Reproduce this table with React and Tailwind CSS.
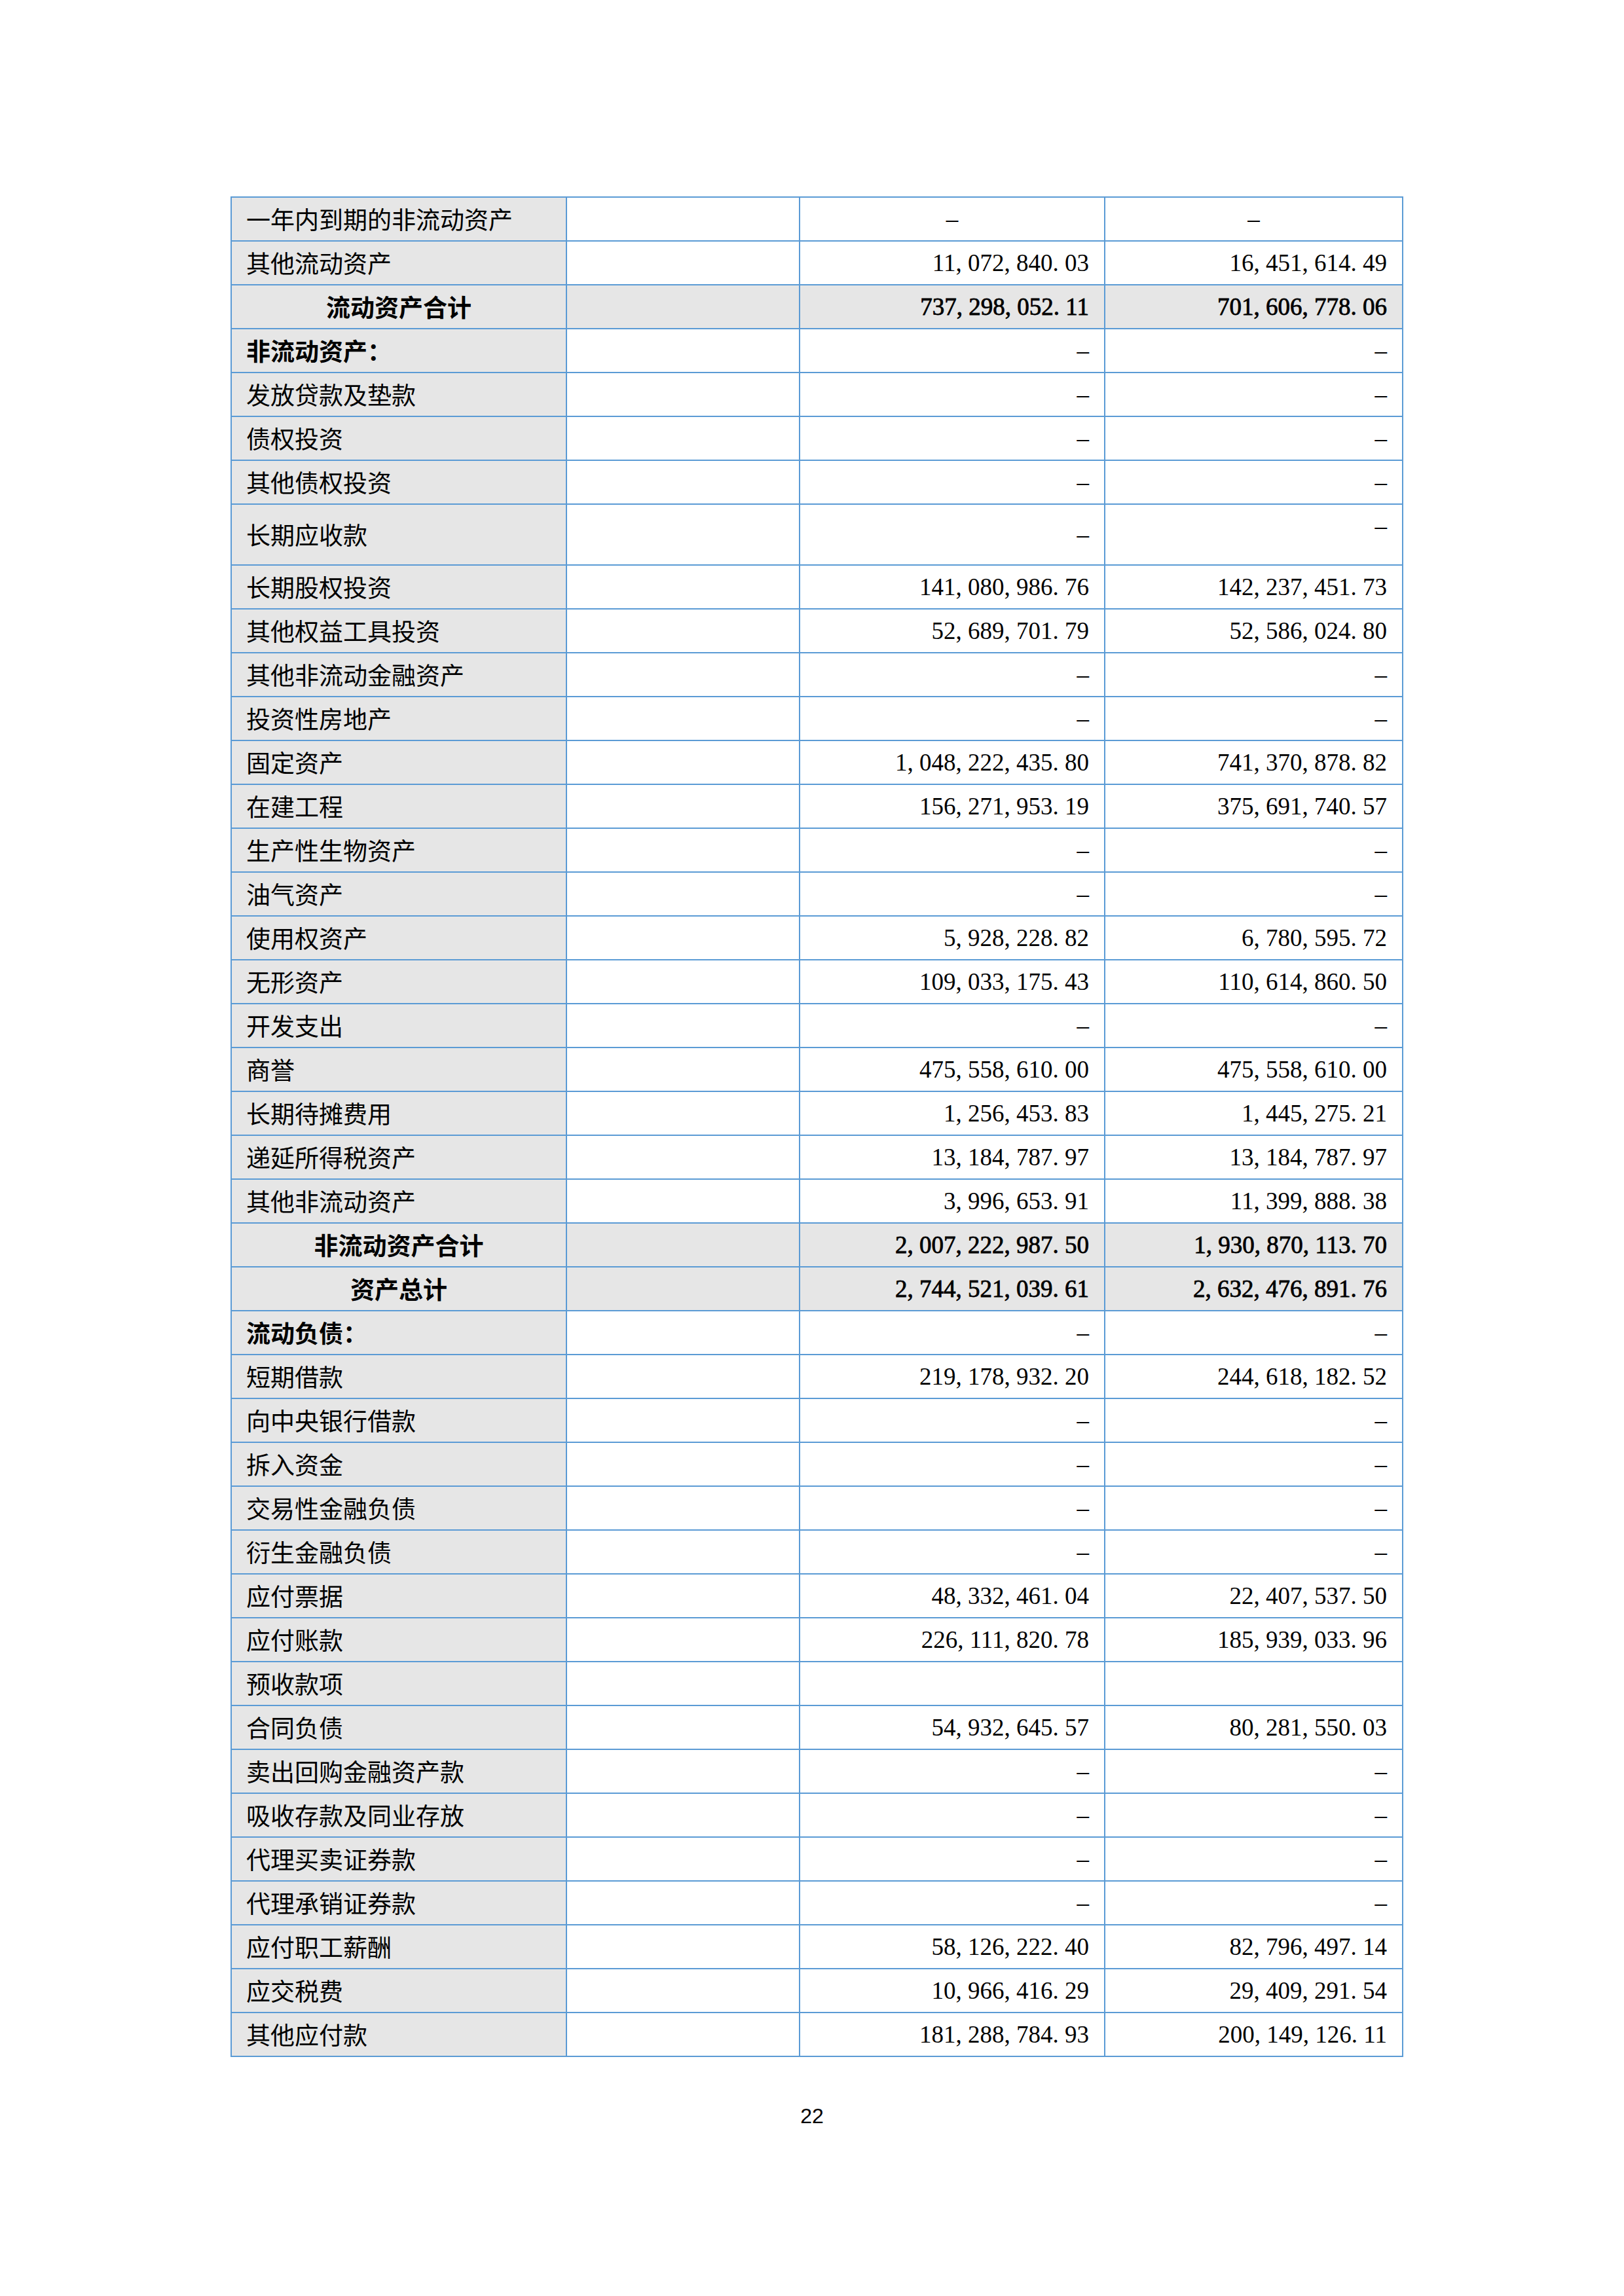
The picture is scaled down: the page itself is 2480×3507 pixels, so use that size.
import React from "react";

const D = "–";

// [label, col3, col4, kind]
// kind: "total" = centered bold label, gray row; "head" = bold label
const ROWS = [
  ["一年内到期的非流动资产", D, D, "center"],
  ["其他流动资产", "11, 072, 840. 03", "16, 451, 614. 49"],
  ["流动资产合计", "737, 298, 052. 11", "701, 606, 778. 06", "total"],
  ["非流动资产：", D, D, "head"],
  ["发放贷款及垫款", D, D],
  ["债权投资", D, D],
  ["其他债权投资", D, D],
  ["长期应收款", D, D, "tall"],
  ["长期股权投资", "141, 080, 986. 76", "142, 237, 451. 73"],
  ["其他权益工具投资", "52, 689, 701. 79", "52, 586, 024. 80"],
  ["其他非流动金融资产", D, D],
  ["投资性房地产", D, D],
  ["固定资产", "1, 048, 222, 435. 80", "741, 370, 878. 82"],
  ["在建工程", "156, 271, 953. 19", "375, 691, 740. 57"],
  ["生产性生物资产", D, D],
  ["油气资产", D, D],
  ["使用权资产", "5, 928, 228. 82", "6, 780, 595. 72"],
  ["无形资产", "109, 033, 175. 43", "110, 614, 860. 50"],
  ["开发支出", D, D],
  ["商誉", "475, 558, 610. 00", "475, 558, 610. 00"],
  ["长期待摊费用", "1, 256, 453. 83", "1, 445, 275. 21"],
  ["递延所得税资产", "13, 184, 787. 97", "13, 184, 787. 97"],
  ["其他非流动资产", "3, 996, 653. 91", "11, 399, 888. 38"],
  ["非流动资产合计", "2, 007, 222, 987. 50", "1, 930, 870, 113. 70", "total"],
  ["资产总计", "2, 744, 521, 039. 61", "2, 632, 476, 891. 76", "total"],
  ["流动负债：", D, D, "head"],
  ["短期借款", "219, 178, 932. 20", "244, 618, 182. 52"],
  ["向中央银行借款", D, D],
  ["拆入资金", D, D],
  ["交易性金融负债", D, D],
  ["衍生金融负债", D, D],
  ["应付票据", "48, 332, 461. 04", "22, 407, 537. 50"],
  ["应付账款", "226, 111, 820. 78", "185, 939, 033. 96"],
  ["预收款项", "", ""],
  ["合同负债", "54, 932, 645. 57", "80, 281, 550. 03"],
  ["卖出回购金融资产款", D, D],
  ["吸收存款及同业存放", D, D],
  ["代理买卖证券款", D, D],
  ["代理承销证券款", D, D],
  ["应付职工薪酬", "58, 126, 222. 40", "82, 796, 497. 14"],
  ["应交税费", "10, 966, 416. 29", "29, 409, 291. 54"],
  ["其他应付款", "181, 288, 784. 93", "200, 149, 126. 11"],
];

const cjk = "font-['Noto_Sans_CJK_SC',sans-serif]";
const num = "font-['Liberation_Serif','Noto_Sans_CJK_SC',serif]";
// totals look faux-bolded in the source, a bit lighter than a real bold face
const fauxBold = "[-webkit-text-stroke:0.8px_black]";

function Row({ label, a, b, kind }) {
  const total = kind === "total";
  const tall = kind === "tall";
  const centerVals = kind === "center";
  const rowBg = total ? "bg-[#e6e6e6]" : "bg-white";
  return (
    <div
      className={`flex border-b-2 border-[#5b9bd5] ${tall ? "h-[93px]" : "h-[67px]"} ${rowBg}`}
    >
      <div
        className={`w-[512px] shrink-0 flex items-center border-r-2 border-[#5b9bd5] bg-[#e6e6e6] text-[37px] text-black ${cjk} ${
          total ? "justify-center font-bold" : "pl-[22px]"
        } ${kind === "head" ? "font-bold" : ""}`}
      >
        {label}
      </div>
      <div className="w-[356px] shrink-0 border-r-2 border-[#5b9bd5]" />
      <div
        className={`w-[466px] shrink-0 flex items-center border-r-2 border-[#5b9bd5] text-[37px] text-black whitespace-pre ${num} ${
          centerVals ? "justify-center" : "justify-end pr-[23px]"
        } ${total ? fauxBold : ""}`}
      >
        {a}
      </div>
      <div
        className={`w-[455px] shrink-0 flex border-r-2 border-[#5b9bd5] text-[37px] text-black whitespace-pre ${num} ${
          centerVals ? "justify-center" : "justify-end pr-[23px]"
        } ${tall ? "items-start pt-[8px]" : "items-center"} ${total ? fauxBold : ""}`}
      >
        {tall ? <div className="h-[49px] flex items-center">{b}</div> : b}
      </div>
    </div>
  );
}

export default function App() {
  return (
    <div className="w-[2480px] min-h-[3507px] bg-white pt-[300px]">
      <div className="ml-[352px] w-[1791px] border-t-2 border-l-2 border-[#5b9bd5]">
        {ROWS.map(([label, a, b, kind], i) => (
          <Row key={i} label={label} a={a} b={b} kind={kind} />
        ))}
      </div>
      <div className="mt-[74px] text-center text-[32px] leading-none text-black font-['Liberation_Sans',sans-serif]">
        22
      </div>
    </div>
  );
}
